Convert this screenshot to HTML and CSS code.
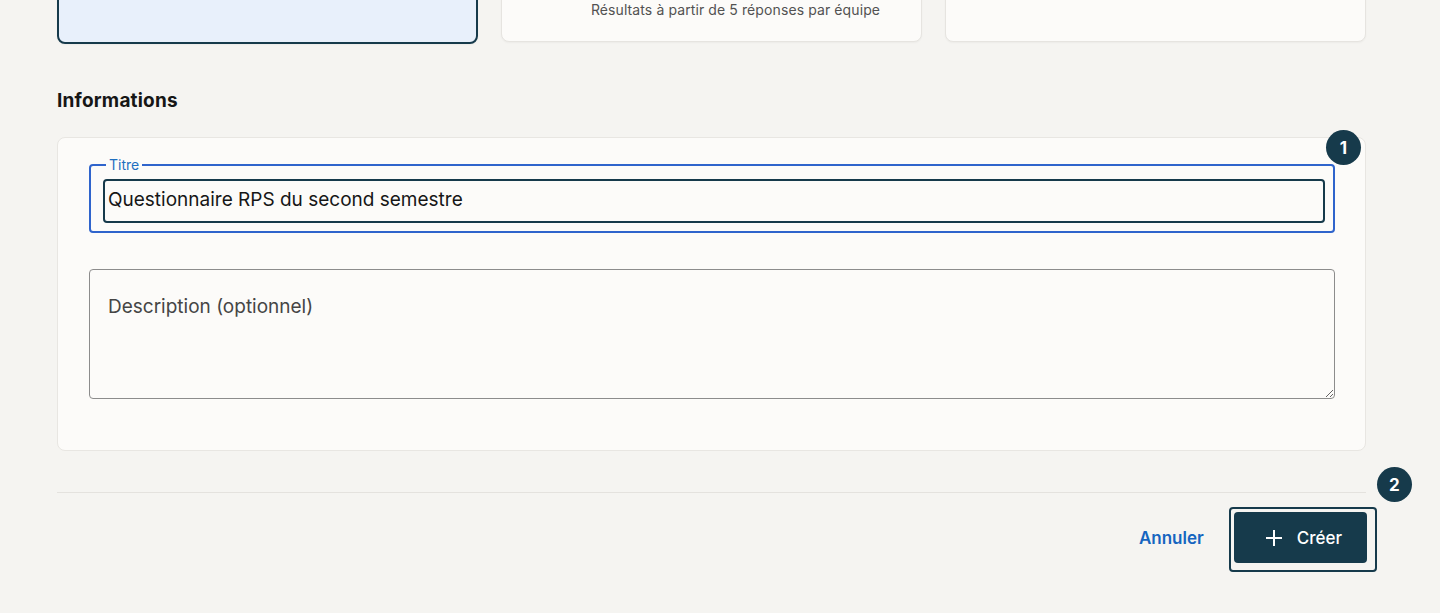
FILE: index.html
```html
<!DOCTYPE html>
<html lang="fr">
<head>
    <meta charset="UTF-8">
    <meta name="viewport" content="width=device-width, initial-scale=1.0">
    <title>Nouveau questionnaire</title>
    <link rel="stylesheet" href="styles.css">
</head>
<body>
    <div class="page">
        <!-- template choice, scrolled partly out of view -->
        <div class="templates">
            <div class="template-card selected"></div>
            <div class="template-card">
                <p class="template-note">Résultats à partir de 5 réponses par équipe</p>
            </div>
            <div class="template-card"></div>
        </div>

        <h2 class="section-title">Informations</h2>

        <div class="form-card">
            <div class="field-wrap">
                <fieldset class="title-field">
                    <legend>Titre</legend>
                    <input type="text" class="title-input" value="Questionnaire RPS du second semestre">
                </fieldset>
                <span class="step-badge step-one">1</span>
            </div>
            <textarea class="description" placeholder="Description (optionnel)"></textarea>
        </div>

        <hr class="divider">

        <div class="actions">
            <a href="#" class="cancel-link">Annuler</a>
            <div class="create-wrap">
                <button class="create-button">
                    <svg width="18" height="18" viewBox="0 0 18 18" fill="none" stroke="white" stroke-width="2">
                        <path d="M9 1v16M1 9h16"/>
                    </svg>
                    Créer
                </button>
                <span class="highlight"></span>
                <span class="step-badge step-two">2</span>
            </div>
        </div>
    </div>
</body>
</html>
```

FILE: styles.css
```css
body {
    margin: 0;
    background-color: #f5f4f1;
    font-family: Inter, "Noto Sans", sans-serif;
    color: #161616;
}
.page {
    width: 1309px;
    margin-left: 57px;
    padding-bottom: 60px;
}
.templates {
    display: grid;
    grid-template-columns: repeat(3, 1fr);
    gap: 23px;
    margin-top: -56px;
}
.template-card {
    height: 98px;
    box-sizing: border-box;
    background-color: #fcfbf9;
    border: 1px solid #e6e4e0;
    border-radius: 8px;
    box-shadow: 0 1px 2px rgba(0,0,0,0.04);
    display: flex;
    align-items: flex-end;
    justify-content: center;
}
.template-card.selected {
    background-color: #e8f0fb;
    border: 2px solid #163a4b;
    height: 100px;
}
.template-note {
    margin: 0 0 22px 48px;
    font-size: 14px;
    line-height: 18px;
    letter-spacing: 0.1px;
    color: #525252;
}
.section-title {
    margin: 45px 0 24px;
    font-size: 19px;
    line-height: 24px;
    font-weight: 700;
    letter-spacing: 0.2px;
}
.form-card {
    background-color: #fcfbf9;
    border: 1px solid #e8e6e2;
    border-radius: 8px;
    padding: 18px 30px 51px 31px;
}
.field-wrap {
    position: relative;
}
.title-field {
    margin: 0;
    border: 2px solid #2f64cc;
    border-radius: 4px;
    padding: 6px 8px 8px 12px;
}
.title-field legend {
    margin-left: 3px;
    padding: 0 3px;
    font-size: 14px;
    line-height: 17px;
    color: #1f6fc0;
}
.title-input {
    display: block;
    width: 100%;
    height: 44px;
    box-sizing: border-box;
    border: 2px solid #163a4b;
    border-radius: 4px;
    padding: 0 3px 3px;
    background: transparent;
    font-family: inherit;
    font-size: 19px;
    color: #161616;
    outline: none;
}
.description {
    display: block;
    width: 100%;
    height: 130px;
    box-sizing: border-box;
    margin-top: 36px;
    border: 1px solid #8c8c8c;
    border-radius: 4px;
    padding: 25px 18px;
    background: transparent;
    font-family: inherit;
    font-size: 19px;
    line-height: 24px;
}
.description::placeholder {
    color: #454545;
}
.step-badge {
    position: absolute;
    width: 35px;
    height: 35px;
    border-radius: 50%;
    background-color: #163a4b;
    color: white;
    font-size: 17px;
    font-weight: 700;
    display: flex;
    align-items: center;
    justify-content: center;
}
.step-one {
    top: -26px;
    right: -26px;
}
.step-two {
    top: -45px;
    left: 143px;
}
.divider {
    margin: 41px 0 0;
    border: none;
    border-top: 1px solid #e4e2de;
}
.actions {
    display: flex;
    justify-content: flex-end;
    align-items: center;
    gap: 30px;
    margin: 19px -1px 0 0;
}
.cancel-link {
    color: #1565c0;
    font-size: 17px;
    font-weight: 600;
    text-decoration: none;
}
.create-wrap {
    position: relative;
}
.create-button {
    display: flex;
    align-items: center;
    gap: 14px;
    height: 51px;
    padding: 0 25px 0 31px;
    background-color: #163a4b;
    color: white;
    border: none;
    border-radius: 4px;
    font-family: inherit;
    font-size: 17px;
    font-weight: 500;
    cursor: pointer;
}
.highlight {
    position: absolute;
    top: -5px;
    left: -5px;
    right: -10px;
    bottom: -9px;
    border: 2px solid #163a4b;
    border-radius: 4px;
}
```
